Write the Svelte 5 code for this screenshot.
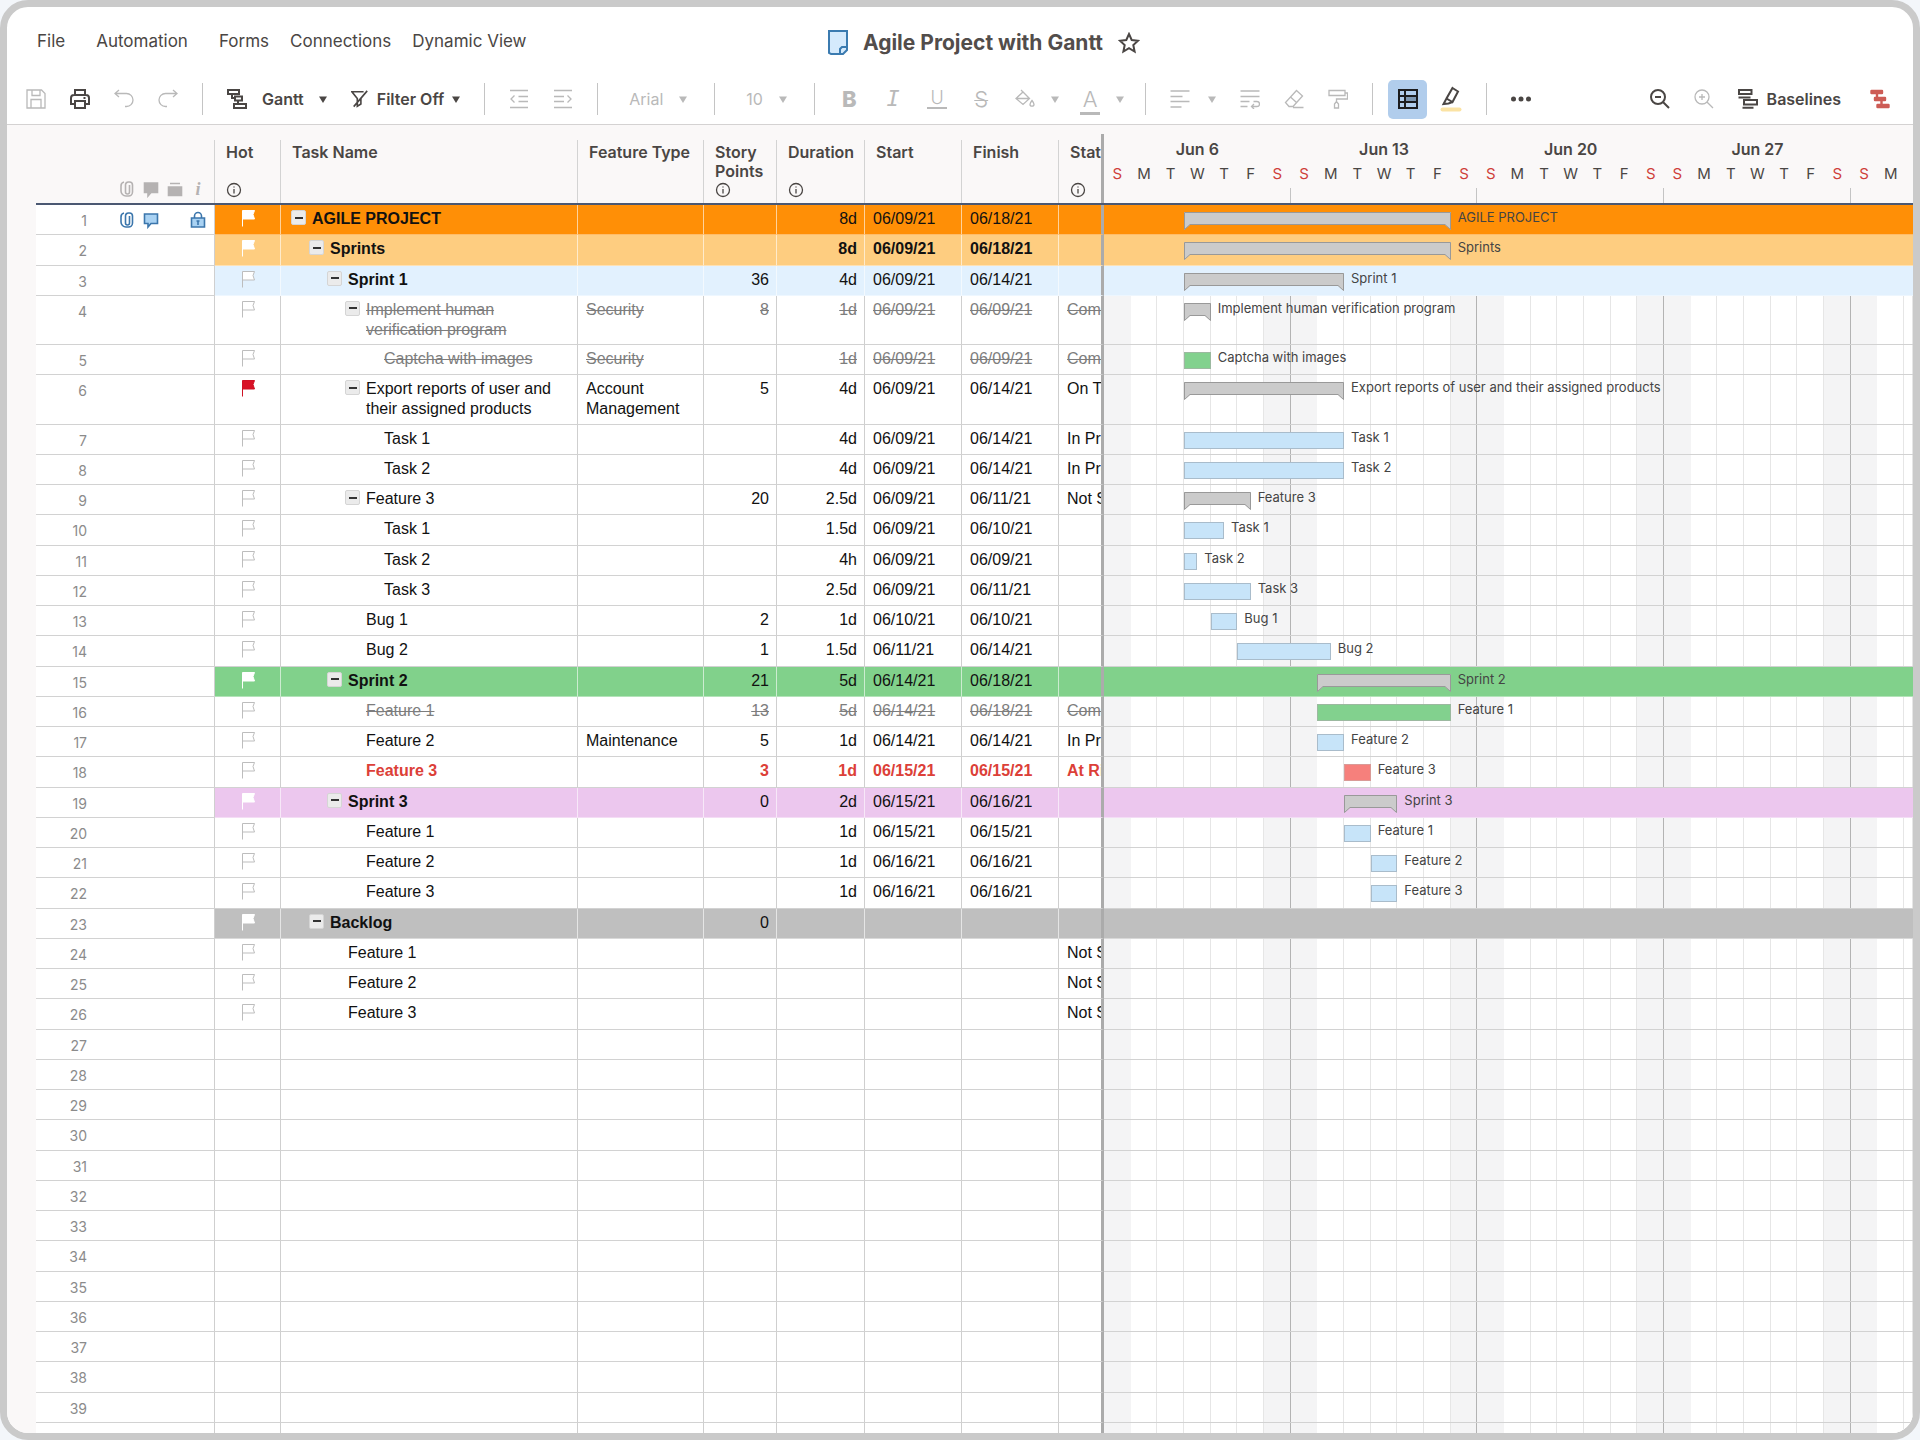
<script>
  // Visible span of the timeline in days: thirty days and a third
  const SPAN = 30 + 1 / 3;
  const LETTERS = ['S', 'M', 'T', 'W', 'T', 'F', 'S'];
  const days = Array.from({ length: 31 }, (_, i) => ({
    letter: i < 30 ? LETTERS[i % 7] : '',
    weekend: i % 7 === 0 || i % 7 === 6,
    weekEnd: i % 7 === 6
  }));
  const months = ['Jun 6', 'Jun 13', 'Jun 20', 'Jun 27'];

  const menus = ['File', 'Automation', 'Forms', 'Connections', 'Dynamic View'];

  const columns = [
    { label: 'Hot', info: true },
    { label: 'Task Name' },
    { label: 'Feature Type' },
    { label: 'Story Points', info: true },
    { label: 'Duration', info: true },
    { label: 'Start' },
    { label: 'Finish' },
    { label: 'Status', info: true }
  ];

  // bar: [first day, last day] counted from Jun 6
  const tasks = [
    { name: 'AGILE PROJECT', level: 0, parent: true, tone: 'orange', strong: true, duration: '8d', start: '06/09/21', finish: '06/18/21', bar: [3, 13] },
    { name: 'Sprints', level: 1, parent: true, tone: 'amber', strong: true, bold: true, duration: '8d', start: '06/09/21', finish: '06/18/21', bar: [3, 13] },
    { name: 'Sprint 1', level: 2, parent: true, tone: 'blue', strong: true, points: '36', duration: '4d', start: '06/09/21', finish: '06/14/21', bar: [3, 9] },
    { name: 'Implement human verification program', level: 3, parent: true, tall: true, done: true, type: 'Security', points: '8', duration: '1d', start: '06/09/21', finish: '06/09/21', status: 'Complete', bar: [3, 4] },
    { name: 'Captcha with images', level: 4, done: true, type: 'Security', duration: '1d', start: '06/09/21', finish: '06/09/21', status: 'Complete', bar: [3, 4], color: 'green' },
    { name: 'Export reports of user and their assigned products', level: 3, parent: true, tall: true, hot: true, type: 'Account Management', points: '5', duration: '4d', start: '06/09/21', finish: '06/14/21', status: 'On Track', bar: [3, 9] },
    { name: 'Task 1', level: 4, duration: '4d', start: '06/09/21', finish: '06/14/21', status: 'In Progress', bar: [3, 9] },
    { name: 'Task 2', level: 4, duration: '4d', start: '06/09/21', finish: '06/14/21', status: 'In Progress', bar: [3, 9] },
    { name: 'Feature 3', level: 3, parent: true, points: '20', duration: '2.5d', start: '06/09/21', finish: '06/11/21', status: 'Not Started', bar: [3, 5.5] },
    { name: 'Task 1', level: 4, duration: '1.5d', start: '06/09/21', finish: '06/10/21', bar: [3, 4.5] },
    { name: 'Task 2', level: 4, duration: '4h', start: '06/09/21', finish: '06/09/21', bar: [3, 3.5] },
    { name: 'Task 3', level: 4, duration: '2.5d', start: '06/09/21', finish: '06/11/21', bar: [3, 5.5] },
    { name: 'Bug 1', level: 3, points: '2', duration: '1d', start: '06/10/21', finish: '06/10/21', bar: [4, 5] },
    { name: 'Bug 2', level: 3, points: '1', duration: '1.5d', start: '06/11/21', finish: '06/14/21', bar: [5, 8.5] },
    { name: 'Sprint 2', level: 2, parent: true, tone: 'green', strong: true, points: '21', duration: '5d', start: '06/14/21', finish: '06/18/21', bar: [8, 13] },
    { name: 'Feature 1', level: 3, done: true, points: '13', duration: '5d', start: '06/14/21', finish: '06/18/21', status: 'Complete', bar: [8, 13], color: 'green' },
    { name: 'Feature 2', level: 3, type: 'Maintenance', points: '5', duration: '1d', start: '06/14/21', finish: '06/14/21', status: 'In Progress', bar: [8, 9] },
    { name: 'Feature 3', level: 3, risk: true, bold: true, points: '3', duration: '1d', start: '06/15/21', finish: '06/15/21', status: 'At Risk', bar: [9, 10], color: 'red' },
    { name: 'Sprint 3', level: 2, parent: true, tone: 'pink', strong: true, points: '0', duration: '2d', start: '06/15/21', finish: '06/16/21', bar: [9, 11] },
    { name: 'Feature 1', level: 3, duration: '1d', start: '06/15/21', finish: '06/15/21', bar: [9, 10] },
    { name: 'Feature 2', level: 3, duration: '1d', start: '06/16/21', finish: '06/16/21', bar: [10, 11] },
    { name: 'Feature 3', level: 3, duration: '1d', start: '06/16/21', finish: '06/16/21', bar: [10, 11] },
    { name: 'Backlog', level: 1, parent: true, tone: 'gray', strong: true, points: '0' },
    { name: 'Feature 1', level: 2, status: 'Not Started' },
    { name: 'Feature 2', level: 2, status: 'Not Started' },
    { name: 'Feature 3', level: 2, status: 'Not Started' }
  ];

  const rows = Array.from({ length: 39 }, (_, i) => tasks[i] ?? {});

  const icons = {
    save: 'M1 1h14.5L19 4.5V19H1z M6 1v5.5h8V1 M5 19v-8.5h10V19',
    print: 'M5 6V1h10v5 M5 15H1V9a3 3 0 0 1 3-3h12a3 3 0 0 1 3 3v6h-4 M5 12h10v7H5z M13.5 9h2',
    undo: 'M5 1 1 4.5 5 8 M1 4.5h11.5a6.5 6.5 0 0 1 0 13H11',
    redo: 'M15 1l4 3.5L15 8 M19 4.5H7.5a6.5 6.5 0 0 0 0 13H9',
    gantt: 'M1 1h11v4H1z M5 5v4h3 M8 7.5h7v4H8z M11 11.5V15 M7 15h12v4H7z',
    filter: 'M14 2H1l6 7.5V18l4-2.5v-6L12 8 M18 1 3 18.5',
    outdent: 'M1 1.5h18 M9.5 7.500H19 M9.5 12.5H19 M1 18.5h18 M5.5 6.5 2 10l3.5 3.5',
    indent: 'M1 1.5h18 M1 7.5h10 M1 12.5h10 M1 18.5h18 M14.5 6.5 18 10l-3.5 3.5',
    fill: 'M1 9.5 8 3l6.5 6.5L8 15.5z M1 9.5h13.5 M6 1l3.5 3.5 M17 11.5c1.500 2 2 2.800 2 3.700a2 2 0 0 1-4 0c0-.9.5-1.700 2-3.700z',
    align: 'M.5 2h19 M.5 7.500h12 M.5 12.500h19 M.5 18h11',
    wrap: 'M.5 2h19 M.5 7.500h19 M.5 12.500h9 M.5 17.500h7 M13.5 12.500H17a2.500 2.500 0 0 1 0 5h-5.500 M14 15l-2.500 2.500L14 20',
    eraser: 'M12.5 1.5 18.500 7 9 17.500H5L1.500 13.500z M6.500 8l6 5.500 M9 18.500h10.500',
    painter: 'M1 1.500h16v5H1z M17 4h2.500v6H8.500v3 M8.500 12.500 6.500 15v4h4v-4z',
    zoomOut: 'M15 8a7 7 0 1 1-14 0a7 7 0 1 1 14 0z M13.200 13.200 19 19 M5 8h6',
    zoomIn: 'M15 8a7 7 0 1 1-14 0a7 7 0 1 1 14 0z M13.200 13.200 19 19 M5 8h6 M8 5v6',
    baselines: 'M1 1h12.500v4H1z M.5 8.500h12 M6 11h13v4.500H6z M4.500 18.800h11',
    critical: 'M1.500 2H12v2H1.500z M5 9h10v2H5z M7.500 16h11v2h-11z M7 4v5 M11.500 11v5'
  };

  const percent = (days) => `${(days / SPAN) * 100}%`;

  // a bar's width is a share of what the track's left padding leaves over
  const barWidth = ([from, to]) => `${((to - from) / (SPAN - from)) * 100}%`;
</script>

{#snippet icon(name)}
  <svg class="icon {name}" viewBox="0 0 20 20" aria-hidden="true"><path d={icons[name]} /></svg>
{/snippet}

{#snippet caret()}
  <svg class="caret" viewBox="0 0 8 7" aria-hidden="true"><path d="M0 .5h8L4 7z" /></svg>
{/snippet}

{#snippet clip()}
  <svg class="mark" viewBox="0 0 16 18" aria-hidden="true">
    <path class="line" d="M10.500 5v7a2 2 0 0 1-4 0V5a3 3 0 0 1 3-3h1a3 3 0 0 1 3 3v7a4 4 0 0 1-4 4H7a5 5 0 0 1-5-5V6a4 4 0 0 1 3-4" />
  </svg>
{/snippet}

{#snippet comment()}
  <svg class="mark" viewBox="0 0 16 18" aria-hidden="true"><path class="shape" d="M1.500 3h13v9.500H8L5 16v-3.500H1.500z" /></svg>
{/snippet}

{#snippet dayGrid()}
  <div class="days" aria-hidden="true">
    {#each days as day}
      <i class:weekend={day.weekend} class:week-end={day.weekEnd}></i>
    {/each}
  </div>
{/snippet}

<main class="window">
  <header class="menubar">
    <nav>
      {#each menus as menu}
        <button>{menu}</button>
      {/each}
    </nav>
    <div class="title">
      <svg class="sheet-icon" viewBox="0 0 20 25" aria-hidden="true">
        <path d="M1 1h18v17l-6 6H3l-2-1z" />
        <path d="M19 17h-5l-2 2v5h3l4-4z" />
      </svg>
      <h1>Agile Project with Gantt</h1>
      <button aria-label="Add to favorites">
        <svg class="star" viewBox="0 0 22 22" aria-hidden="true"><path d="M11 2l2.700 6 6.300.700-4.700 4.300 1.300 6.500L11 16.200 5.400 19.500l1.300-6.500L2 8.700 8.300 8z" /></svg>
      </button>
    </div>
    <div class="spacer"></div>
  </header>

  <div class="toolbar">
    <button class="muted" aria-label="Save">{@render icon('save')}</button>
    <button aria-label="Print">{@render icon('print')}</button>
    <button class="muted" aria-label="Undo">{@render icon('undo')}</button>
    <button class="muted" aria-label="Redo">{@render icon('redo')}</button>
    <hr />
    <button class="view">{@render icon('gantt')}<span>Gantt</span>{@render caret()}</button>
    <button class="filter-off">{@render icon('filter')}<span>Filter Off</span>{@render caret()}</button>
    <hr />
    <button class="muted" aria-label="Outdent">{@render icon('outdent')}</button>
    <button class="muted" aria-label="Indent">{@render icon('indent')}</button>
    <hr />
    <label class="field family muted">
      <select aria-label="Font family"><option>Arial</option></select>
      {@render caret()}
    </label>
    <hr />
    <label class="field size muted">
      <select aria-label="Font size"><option>10</option></select>
      {@render caret()}
    </label>
    <hr />
    <button class="muted letter bold" aria-label="Bold">B</button>
    <button class="muted letter italic" aria-label="Italic">I</button>
    <button class="muted letter underline" aria-label="Underline">U</button>
    <button class="muted letter strike" aria-label="Strikethrough">S</button>
    <div class="colors">
      <button class="muted split" aria-label="Background color">{@render icon('fill')}{@render caret()}</button>
      <button class="muted split" aria-label="Text color"><span class="letter color">A</span>{@render caret()}</button>
    </div>
    <hr />
    <button class="muted split wide" aria-label="Align">{@render icon('align')}{@render caret()}</button>
    <button class="muted" aria-label="Wrap text">{@render icon('wrap')}</button>
    <button class="muted" aria-label="Clear format">{@render icon('eraser')}</button>
    <button class="muted" aria-label="Format painter">{@render icon('painter')}</button>
    <hr />
    <div class="toggles">
      <button class="active" aria-label="Show grid" aria-pressed="true">
        <svg class="icon grid" viewBox="0 0 20 20" aria-hidden="true">
          <path class="cell" d="M7 7h12v6H7z" />
          <path d="M1 1h18v18H1z M7 1v18 M1 7h18 M1 13h18" />
        </svg>
      </button>
      <button aria-label="Highlight changes">
        <svg class="marker" viewBox="0 0 22 26" aria-hidden="true">
          <path class="swatch" d="M2.500 23.500h17" />
          <path d="M12.500 2 18 5.500 12.500 16l-6-3.500z M6.500 12.500 3.500 18l5-.5 4-1.500" />
        </svg>
      </button>
    </div>
    <hr />
    <button aria-label="More">
      <svg class="dots" viewBox="0 0 20 20" aria-hidden="true">
        <circle cx="2.5" cy="10" r="2.5" /><circle cx="10" cy="10" r="2.5" /><circle cx="17.5" cy="10" r="2.5" />
      </svg>
    </button>
    <div class="right">
      <button aria-label="Zoom out">{@render icon('zoomOut')}</button>
      <button class="muted" aria-label="Zoom in">{@render icon('zoomIn')}</button>
      <button class="baselines-button">{@render icon('baselines')}<span>Baselines</span></button>
      <button aria-label="Critical path">{@render icon('critical')}</button>
    </div>
  </div>

  <div class="sheet">
    <table>
      <thead>
        <tr>
          <th class="gutter">
            <div class="marks">
              {@render clip()}
              {@render comment()}
              <svg class="mark" viewBox="0 0 16 18" aria-hidden="true"><path class="shape" d="M1.500 7h13v8.500h-13z M3 3.500h10" /></svg>
              <span class="about">i</span>
            </div>
          </th>
          {#each columns as column}
            <th scope="col">
              <span>{column.label}</span>
              {#if column.info}
                <svg class="info" viewBox="0 0 16 16" aria-hidden="true"><circle cx="8" cy="8" r="6.5" /><path d="M8 7v4.500 M8 4.500v1" /></svg>
              {/if}
            </th>
          {/each}
          <th class="timeline">
            <div class="months">
              {#each months as month}<span>{month}</span>{/each}
            </div>
            <div class="letters">
              {#each days as day}<span class:weekend={day.weekend}>{day.letter}</span>{/each}
            </div>
            <div class="months ticks">
              {#each months as month}<i></i>{/each}
            </div>
          </th>
        </tr>
      </thead>
      <tbody>
        {#each rows as row, i}
          <tr class={row.tone} class:toned={row.tone} class:tall={row.tall} class:done={row.done} class:risk={row.risk} class:bold={row.bold}>
            <td class="gutter">
              <span class="number">{i + 1}</span>
              {#if i === 0}
                <div class="marks linked">
                  {@render clip()}
                  {@render comment()}
                  <svg class="mark lock" viewBox="0 0 16 18" aria-hidden="true">
                    <path class="line" d="M4.500 7V5a3.500 3.500 0 0 1 7 0v2" />
                    <path class="shape" d="M1.500 7h13v9h-13z" />
                    <path class="line" d="M6.500 10h3 M8 10v4" />
                  </svg>
                </div>
              {/if}
            </td>
            <td class="flag">
              {#if row.name}
                <svg class:hot={row.hot} viewBox="0 0 15 18" aria-label="Flag"><path d="M1.500 17.500V1.500h12l-1.500 4 1.500 4.500h-12" /></svg>
              {/if}
            </td>
            <td class="task" style:padding-left="{10 + (row.level ?? 0) * 18}px">
              {#if row.name}
                {#if row.parent}
                  <button class="fold" aria-label="Collapse {row.name}"></button>
                {:else}
                  <span class="leaf"></span>
                {/if}
                <span class:strong={row.strong}>{row.name}</span>
              {/if}
            </td>
            <td>{row.type ?? ''}</td>
            <td class="numeric">{row.points ?? ''}</td>
            <td class="numeric">{row.duration ?? ''}</td>
            <td>{row.start ?? ''}</td>
            <td>{row.finish ?? ''}</td>
            <td class="status">{row.status ?? ''}</td>
            <td class="timeline">
              {#if !row.tone}
                {@render dayGrid()}
              {/if}
              {#if row.bar}
                <div class="track" style:padding-left={percent(row.bar[0])}>
                  {#if row.parent}
                    <div class="summary" style:flex-basis={barWidth(row.bar)}>
                      <svg viewBox="0 0 7 18" aria-hidden="true"><path class="body" d="M0 0h7v12L0 18z" /><path d="M7 .5H.5v17L6 12.500h1" /></svg>
                      <div></div>
                      <svg viewBox="0 0 7 18" aria-hidden="true"><path class="body" d="M7 0H0v12l7 6z" /><path d="M0 .5h6.500v17L1 12.500H0" /></svg>
                    </div>
                  {:else}
                    <div class="bar {row.color}" style:flex-basis={barWidth(row.bar)}></div>
                  {/if}
                  <span>{row.name}</span>
                </div>
              {/if}
            </td>
          </tr>
        {/each}
        <tr class="rest" aria-hidden="true">
          <td class="gutter"></td>
          {#each columns as column}<td class:status={column.label === 'Status'}></td>{/each}
          <td class="timeline">{@render dayGrid()}</td>
        </tr>
      </tbody>
    </table>
  </div>
</main>

<style>
  :global(body) {
    margin: 0;
    background: #f3f6fa;
  }

  .window {
    box-sizing: border-box;
    min-height: 100vh;
    border: 7px solid #cacaca;
    border-radius: 28px;
    overflow: hidden;
    display: flex;
    flex-direction: column;
    background: #fff;
    color: #4a4644;
    font-family: Inter, 'Liberation Sans', sans-serif;
    font-size: 16px;
  }

  button,
  select {
    appearance: none;
    margin: 0;
    padding: 0;
    border: 0;
    background: none;
    font: inherit;
    color: inherit;
  }

  svg {
    display: block;
    flex: none;
    fill: none;
    stroke: currentColor;
  }

  .menubar {
    display: flex;
    align-items: center;
    height: 67px;
    padding: 0 30px;
  }

  .menubar nav,
  .menubar .spacer {
    flex: 1;
  }

  nav {
    display: flex;
    gap: 21px;
    font-size: 17px;
    white-space: nowrap;
  }

  nav button:nth-child(-n + 2) {
    margin-right: 10px;
  }

  .title {
    display: flex;
    align-items: center;
    gap: 15px;
    padding: 4px 0 0 48px;
  }

  h1 {
    margin: 0;
    font-size: 21px;
    font-weight: 700;
    line-height: 28px;
    color: #524d4b;
  }

  .sheet-icon {
    width: 20px;
    height: 25px;
    stroke: #3b7bb0;
    stroke-width: 2;
    fill: #d5eafc;
  }

  .star {
    width: 22px;
    height: 22px;
    stroke-width: 2;
  }

  .toolbar {
    display: flex;
    align-items: center;
    gap: 24px;
    height: 50px;
    padding: 0 23px 0 19px;
    border-bottom: 1px solid #d4d2d2;
    font-weight: 600;
  }

  .toolbar button {
    display: flex;
    align-items: center;
    justify-content: center;
    flex: none;
  }

  .toolbar hr {
    width: 1px;
    height: 32px;
    margin: 0;
    border: 0;
    background: #c4c4c4;
  }

  .muted {
    color: #b9b9b9;
  }

  .icon {
    width: 20px;
    height: 20px;
    stroke-width: 1.3;
  }

  .print,
  .gantt,
  .zoomOut,
  .baselines,
  .grid {
    stroke-width: 2;
  }

  .filter {
    width: 18px;
    stroke-width: 1.8;
  }

  .critical {
    color: #cd5c55;
    stroke-width: 2.4;
    stroke-linejoin: round;
    fill: currentColor;
  }

  .caret {
    width: 8px;
    height: 7px;
    fill: currentColor;
    stroke: none;
  }

  .toolbar .view {
    gap: 15px;
  }

  .toolbar .filter-off {
    gap: 8px;
  }

  .field {
    box-sizing: border-box;
    display: flex;
    align-items: center;
    justify-content: space-between;
    padding: 0 3px 0 7px;
    font-weight: 400;
  }

  .field select {
    flex: 1;
    min-width: 0;
  }

  .family {
    width: 68px;
  }

  .size {
    width: 51px;
  }

  .letter {
    width: 20px;
    height: 24px;
    font-size: 22px;
    line-height: 24px;
    font-weight: 300;
    text-align: center;
  }

  .letter.bold {
    font-weight: 800;
  }

  .letter.italic {
    font-family: 'DejaVu Sans Mono', monospace;
    font-style: italic;
  }

  .toolbar .letter.underline {
    box-sizing: border-box;
    height: 20px;
    border-bottom: 2px solid;
    font-size: 18px;
    line-height: 16px;
  }

  .letter.strike {
    text-decoration: line-through 1px;
  }

  .letter.color {
    box-sizing: border-box;
    height: 27px;
    margin-top: 4px;
    border-bottom: 3px solid;
    line-height: 22px;
  }

  .colors {
    display: flex;
    align-items: center;
    gap: 21px;
    margin-right: -3px;
  }

  .toolbar .split {
    gap: 16px;
  }

  .toolbar .wide {
    gap: 18px;
  }

  .toggles {
    display: flex;
    align-items: center;
    gap: 13px;
    margin-left: -9px;
  }

  .toolbar .active {
    width: 39px;
    height: 39px;
    border-radius: 5px;
    background: #b1cdec;
    color: #1c1c1e;
  }

  .grid .cell {
    fill: #7f98b3;
    stroke: none;
  }

  .marker {
    width: 22px;
    height: 26px;
    stroke-width: 2;
  }

  .marker .swatch {
    stroke: #fbe3a4;
    stroke-width: 4;
    stroke-linecap: round;
  }

  .dots {
    width: 20px;
    height: 20px;
    fill: currentColor;
    stroke: none;
  }

  .right {
    display: flex;
    align-items: center;
    gap: 24px;
    margin-left: auto;
  }

  .toolbar .baselines-button {
    gap: 9px;
    padding-right: 5px;
  }

  .sheet {
    flex: 1;
    display: flex;
    padding-left: 29px;
    background: #faf8f8;
  }

  table,
  tbody {
    flex: 1;
    display: flex;
    flex-direction: column;
  }

  thead {
    display: block;
    border-bottom: 2px solid #4b5872;
  }

  tr {
    display: grid;
    grid-template-columns: 179px 66px 297px 126px 73px 88px 97px 97px 45px minmax(0, 1fr);
  }

  thead tr {
    height: 78px;
  }

  th {
    display: flex;
    flex-direction: column;
    align-items: flex-start;
    justify-content: space-between;
    box-sizing: border-box;
    margin-top: 15px;
    padding: 3px 0 5px 11px;
    border-right: 1px solid #d3d3d3;
    overflow: hidden;
    font-weight: 600;
    font-size: 16px;
    line-height: 19px;
    text-align: left;
  }

  th.gutter {
    justify-content: flex-end;
    align-items: flex-end;
    padding: 0 9px 4px 0;
  }

  th:nth-child(9) {
    margin-top: 9px;
    padding-top: 9px;
    border-right: 3px solid #ababab;
  }

  th.timeline {
    align-items: stretch;
    justify-content: flex-start;
    gap: 5px;
    padding: 0;
    border: 0;
  }

  .info {
    width: 16px;
    height: 16px;
    stroke-width: 1.3;
  }

  .marks {
    display: flex;
    gap: 8px;
    color: #b5b2b2;
  }

  .mark {
    width: 16px;
    height: 18px;
  }

  .mark .line {
    stroke-width: 1.6;
  }

  .mark .shape {
    fill: currentColor;
    stroke-width: 1.6;
  }

  .about {
    width: 14px;
    font-family: 'Liberation Serif', serif;
    font-style: italic;
    font-size: 18px;
    text-align: center;
  }

  .linked {
    color: #3b76ac;
  }

  .linked .shape {
    fill: #a9d2f3;
  }

  .linked .lock {
    margin-left: 23px;
  }

  .months {
    display: grid;
    grid-template-columns: repeat(4, minmax(0, 21fr)) minmax(0, 7fr);
    text-align: center;
  }

  .ticks {
    flex: 1;
  }

  .ticks i {
    border-right: 1px solid #c4c4c4;
  }

  .letters,
  .days {
    display: grid;
    grid-template-columns: repeat(30, minmax(0, 3fr)) minmax(0, 1fr);
  }

  .letters {
    font-weight: 400;
    font-size: 15px;
    text-align: center;
  }

  .letters .weekend {
    color: #cf3f3a;
  }

  tbody tr {
    flex: 1 0 30px;
    color: #111;
    background: #fff;
    font-family: 'Liberation Sans', Arial, sans-serif;
    line-height: 20px;
  }

  tbody .tall {
    flex-basis: 49px;
  }

  tbody .rest {
    flex: 0 0 10px;
  }

  td {
    box-sizing: border-box;
    padding: 4px 7px 0 8px;
    border-right: 1px solid #cfcfcf;
    border-bottom: 1px solid #d2d2d2;
    overflow: hidden;
  }

  .rest td {
    padding-top: 0;
    border-bottom: 0;
  }

  td.gutter {
    display: flex;
    gap: 32px;
    padding: 6px 8px 0 0;
    background: #fff;
  }

  .number {
    width: 51px;
    flex: none;
    font-family: Inter, sans-serif;
    font-size: 14px;
    font-weight: 400;
    text-align: right;
    color: #8b8b8b;
  }

  .numeric {
    text-align: right;
  }

  .flag {
    display: flex;
    justify-content: center;
    align-items: flex-start;
  }

  .flag svg {
    width: 15px;
    height: 18px;
    color: #bdbdbd;
    fill: #fff;
  }

  .flag .hot {
    color: #cf1225;
    fill: #d81226;
  }

  .orange .flag svg,
  .amber .flag svg,
  .green .flag svg,
  .pink .flag svg,
  .gray .flag svg {
    color: #fff;
  }

  .task {
    display: flex;
    align-items: flex-start;
    gap: 6px;
  }

  .fold,
  .leaf {
    flex: none;
    width: 15px;
    height: 15px;
  }

  .fold {
    box-sizing: border-box;
    display: flex;
    align-items: center;
    justify-content: center;
    margin-top: 1px;
    border: 1px solid #d5d5d5;
    border-radius: 2px;
    background: #ebebeb;
  }

  .fold::before {
    content: '';
    width: 8px;
    height: 2px;
    background: #333;
  }

  .strong,
  .bold {
    font-weight: 700;
  }

  .done td:not(.timeline, .gutter) {
    color: #7d7d7d;
    text-decoration: line-through;
  }

  .risk {
    color: #dc4038;
  }

  .status {
    padding-right: 0;
    border-right: 3px solid #ababab;
    white-space: nowrap;
  }

  .toned td:not(.gutter) {
    border-right-color: #ffffff99;
    border-bottom-color: #ffffff66;
  }

  .toned td.status {
    border-right-color: #ababab;
  }

  .orange {
    background: #ff8f06;
  }

  .amber {
    background: #fecd80;
  }

  .blue {
    background: #e2f1fe;
  }

  .green {
    background: #81d18b;
  }

  .pink {
    background: #ecc7ee;
  }

  .gray {
    background: #bfbfbf;
  }

  td.timeline {
    position: relative;
    padding: 0;
    border-right: 0;
  }

  /* day columns sit behind the bars */
  .days {
    position: absolute;
    inset: 0;
  }

  .days i {
    border-right: 1px solid #e6e6e6;
  }

  .days .weekend {
    background: #f4f4f5;
    border-right-color: #f4f4f5;
  }

  .days .week-end {
    border-right-color: #b3b3b3;
  }

  .track {
    position: relative;
    display: flex;
    align-items: flex-start;
    padding-top: 7px;
  }

  .track span {
    margin: -5px 0 0 7px;
    flex: none;
    font-family: Inter, sans-serif;
    font-size: 13px;
    font-weight: 400;
    line-height: 20px;
    color: #444;
    white-space: nowrap;
  }

  .bar {
    flex: none;
    box-sizing: border-box;
    height: 17px;
    border: 1px solid #a9bccb;
    background: #c7e4f9;
  }

  .bar.green {
    border-color: #9cb9a0;
    background: #82d18e;
  }

  .bar.red {
    border-color: #d99a97;
    background: #f6807c;
  }

  .summary {
    flex: none;
    display: flex;
  }

  .summary svg {
    width: 7px;
    height: 18px;
    stroke: #999;
  }

  .summary .body {
    fill: #cbcbcb;
    stroke: none;
  }

  .summary div {
    flex: 1;
    box-sizing: border-box;
    height: 13px;
    border: solid #999;
    border-width: 1px 0;
    background: #cbcbcb;
  }
</style>
